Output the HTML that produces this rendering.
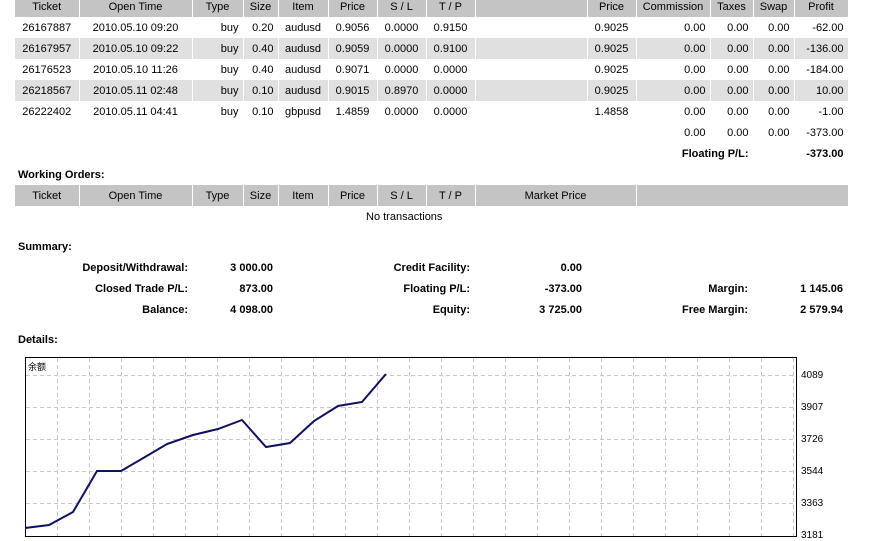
<!DOCTYPE html>
<html><head><meta charset="utf-8"><style>
body{margin:0;width:889px;height:541px;overflow:hidden;background:#fff;font-family:"Liberation Sans","Noto Sans CJK SC",sans-serif;font-size:11px;color:#000;position:relative}
table{border-collapse:collapse;table-layout:fixed;position:absolute;left:15px}
td{padding:0 4px;height:21px;white-space:nowrap;overflow:hidden;border-right:1px solid #fff}
tr.h td{background:#c4c4c4;text-align:center}
tr.g td{background:#e0e0e0}
.c{text-align:center}.r{text-align:right}
b{font-weight:bold}
.a{position:absolute;white-space:nowrap}
</style></head><body>
<table style="top:-4px;width:833px">
<colgroup><col style="width:64px"><col style="width:113px"><col style="width:51px"><col style="width:35px"><col style="width:50px"><col style="width:49px"><col style="width:49px"><col style="width:49px"><col style="width:112px"><col style="width:49px"><col style="width:74px"><col style="width:43px"><col style="width:41px"><col style="width:54px"></colgroup>
<tr class="h"><td>Ticket</td><td>Open Time</td><td>Type</td><td>Size</td><td>Item</td><td>Price</td><td>S / L</td><td>T / P</td><td></td><td>Price</td><td>Commission</td><td>Taxes</td><td>Swap</td><td>Profit</td></tr>
<tr><td class="c">26167887</td><td class="c">2010.05.10 09:20</td><td class="r">buy</td><td class="r">0.20</td><td class="c">audusd</td><td class="c">0.9056</td><td class="c">0.0000</td><td class="c">0.9150</td><td></td><td class="c">0.9025</td><td class="r">0.00</td><td class="r">0.00</td><td class="r">0.00</td><td class="r">-62.00</td></tr>
<tr class="g"><td class="c">26167957</td><td class="c">2010.05.10 09:22</td><td class="r">buy</td><td class="r">0.40</td><td class="c">audusd</td><td class="c">0.9059</td><td class="c">0.0000</td><td class="c">0.9100</td><td></td><td class="c">0.9025</td><td class="r">0.00</td><td class="r">0.00</td><td class="r">0.00</td><td class="r">-136.00</td></tr>
<tr><td class="c">26176523</td><td class="c">2010.05.10 11:26</td><td class="r">buy</td><td class="r">0.40</td><td class="c">audusd</td><td class="c">0.9071</td><td class="c">0.0000</td><td class="c">0.0000</td><td></td><td class="c">0.9025</td><td class="r">0.00</td><td class="r">0.00</td><td class="r">0.00</td><td class="r">-184.00</td></tr>
<tr class="g"><td class="c">26218567</td><td class="c">2010.05.11 02:48</td><td class="r">buy</td><td class="r">0.10</td><td class="c">audusd</td><td class="c">0.9015</td><td class="c">0.8970</td><td class="c">0.0000</td><td></td><td class="c">0.9025</td><td class="r">0.00</td><td class="r">0.00</td><td class="r">0.00</td><td class="r">10.00</td></tr>
<tr><td class="c">26222402</td><td class="c">2010.05.11 04:41</td><td class="r">buy</td><td class="r">0.10</td><td class="c">gbpusd</td><td class="c">1.4859</td><td class="c">0.0000</td><td class="c">0.0000</td><td></td><td class="c">1.4858</td><td class="r">0.00</td><td class="r">0.00</td><td class="r">0.00</td><td class="r">-1.00</td></tr>
<tr><td colspan="10"></td><td class="r">0.00</td><td class="r">0.00</td><td class="r">0.00</td><td class="r">-373.00</td></tr>
<tr><td colspan="10"></td><td colspan="2" class="r"><b>Floating P/L:</b></td><td></td><td class="r"><b>-373.00</b></td></tr>
</table>
<div class="a" style="left:18px;top:169px"><b>Working Orders:</b></div>
<table style="top:185px;width:833px">
<colgroup><col style="width:64px"><col style="width:113px"><col style="width:51px"><col style="width:35px"><col style="width:50px"><col style="width:49px"><col style="width:49px"><col style="width:49px"><col style="width:161px"><col style="width:212px"></colgroup>
<tr class="h"><td style="height:20px">Ticket</td><td>Open Time</td><td>Type</td><td>Size</td><td>Item</td><td>Price</td><td>S / L</td><td>T / P</td><td>Market Price</td><td></td></tr>
</table>
<div class="a" style="left:366px;top:211px">No transactions</div>
<div class="a" style="left:18px;top:241px"><b>Summary:</b></div>
<div class="a r" style="right:701px;top:262px"><b>Deposit/Withdrawal:</b></div>
<div class="a r" style="right:616px;top:262px"><b>3 000.00</b></div>
<div class="a r" style="right:701px;top:283px"><b>Closed Trade P/L:</b></div>
<div class="a r" style="right:616px;top:283px"><b>873.00</b></div>
<div class="a r" style="right:701px;top:304px"><b>Balance:</b></div>
<div class="a r" style="right:616px;top:304px"><b>4 098.00</b></div>
<div class="a r" style="right:419px;top:262px"><b>Credit Facility:</b></div>
<div class="a r" style="right:307px;top:262px"><b>0.00</b></div>
<div class="a r" style="right:419px;top:283px"><b>Floating P/L:</b></div>
<div class="a r" style="right:307px;top:283px"><b>-373.00</b></div>
<div class="a r" style="right:419px;top:304px"><b>Equity:</b></div>
<div class="a r" style="right:307px;top:304px"><b>3 725.00</b></div>
<div class="a r" style="right:141px;top:283px"><b>Margin:</b></div>
<div class="a r" style="right:46px;top:283px"><b>1 145.06</b></div>
<div class="a r" style="right:141px;top:304px"><b>Free Margin:</b></div>
<div class="a r" style="right:46px;top:304px"><b>2 579.94</b></div>
<div class="a" style="left:18px;top:334px"><b>Details:</b></div>
<svg class="a" style="left:0;top:0" width="889" height="541">
<g stroke="#c8c8c8" stroke-dasharray="4,3" stroke-width="1">
<path d="M57.5 358V536M89.5 358V536M121.5 358V536M153.5 358V536M185.5 358V536M217.5 358V536M249.5 358V536M281.5 358V536M313.5 358V536M345.5 358V536M377.5 358V536M409.5 358V536M441.5 358V536M473.5 358V536M505.5 358V536M537.5 358V536M569.5 358V536M601.5 358V536M633.5 358V536M665.5 358V536M697.5 358V536M729.5 358V536M761.5 358V536M793.5 358V536"/>
<path d="M26 375.5H796M26 407.5H796M26 439.5H796M26 471.5H796M26 503.5H796"/>
</g>
<rect x="25.5" y="357.5" width="771" height="179" fill="none" stroke="#000"/>
<polyline fill="none" stroke="#101060" stroke-width="2" points="25,528 49,525 73,512 97,471 121,471 145,457 167,444 193,435 218,429 242,420 266,447 290,443 314,421 338,406 362,402 386,374"/>
<g font-size="10" font-family="Liberation Sans,sans-serif"><text x="801" y="378">4089</text><text x="801" y="410">3907</text><text x="801" y="442">3726</text><text x="801" y="474">3544</text><text x="801" y="506">3363</text><text x="801" y="538">3181</text></g>
<text x="28" y="370" font-size="9" font-family="Noto Sans CJK SC,sans-serif">余额</text>
</svg>
</body></html>
